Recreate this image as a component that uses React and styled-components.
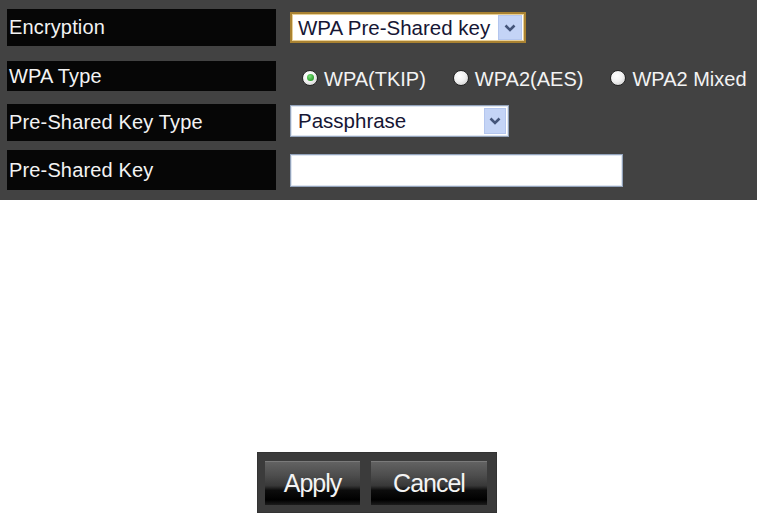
import React from "react";
import styled, { createGlobalStyle } from "styled-components";

const Global = createGlobalStyle`
  html, body { margin: 0; padding: 0; background: #ffffff; }
  body { font-family: "Liberation Sans", Arial, sans-serif; width: 757px; height: 513px; overflow: hidden; }
`;

const Page = styled.div`
  width: 757px;
  height: 513px;
  display: flex;
  flex-direction: column;
`;

const Panel = styled.div`
  background: #424242;
  height: 200px;
  box-sizing: border-box;
  padding: 9px 0 0 7px;
  display: flex;
  flex-direction: column;
`;

const Row = styled.div`
  display: flex;
  height: ${(p) => p.$h}px;
  margin-top: ${(p) => p.$mt || 0}px;
  gap: 14px;
`;

const Label = styled.div`
  width: 269px;
  flex: none;
  background: #060606;
  color: #f3f3f3;
  font-size: 20px;
  display: flex;
  align-items: center;
  padding-left: 2px;
  box-sizing: border-box;
  letter-spacing: 0.15px;
`;

const Cell = styled.div`
  display: flex;
  align-items: flex-start;
  padding-top: ${(p) => p.$pt || 0}px;
`;

const Select = styled.div`
  width: ${(p) => p.$w}px;
  height: ${(p) => p.$h}px;
  box-sizing: border-box;
  background: #ffffff;
  border: ${(p) => (p.$gold ? "2px solid #a98232" : "1px solid #93a3bb")};
  box-shadow: ${(p) =>
    p.$gold ? "inset 0 0 0 1px #e8cf95" : "inset 0 0 0 1px #dfe6f0"};
  display: flex;
  align-items: center;
  justify-content: space-between;
  padding: 0 2px 0 ${(p) => (p.$gold ? 6 : 7)}px;
  color: #161634;
  font-size: 20.5px;
`;

const Arrow = styled.div`
  width: ${(p) => p.$w}px;
  height: ${(p) => p.$h}px;
  background: #c4d4f6;
  border: 1px solid #b4c6ee;
  box-sizing: border-box;
  display: flex;
  align-items: center;
  justify-content: center;
`;

const TextInput = styled.div`
  width: 333px;
  height: 33px;
  box-sizing: border-box;
  background: #ffffff;
  border: 1px solid #93a3bb;
  box-shadow: inset 0 0 0 1px #dfe6f0;
`;

const RadioGroup = styled.div`
  display: flex;
  align-items: center;
  gap: 27px;
  margin-left: 12px;
`;

const RadioItem = styled.label`
  display: flex;
  align-items: center;
  gap: 6px;
  color: #f3f3f3;
  font-size: 20px;
`;

const RadioDot = styled.span`
  width: 16px;
  height: 16px;
  border-radius: 50%;
  box-sizing: border-box;
  border: 1px solid #262626;
  background: radial-gradient(circle at 40% 35%, #ffffff 0%, #f2f2f2 45%, #c4c4c4 100%);
  display: flex;
  align-items: center;
  justify-content: center;
  position: relative;
  top: -2px;
  &::after {
    content: "";
    display: ${(p) => (p.$on ? "block" : "none")};
    width: 7px;
    height: 7px;
    border-radius: 50%;
    background: radial-gradient(circle at 40% 35%, #7be07b 0%, #2f9e2f 70%, #1f7a1f 100%);
  }
`;

const Footer = styled.div`
  display: flex;
  margin-top: 252px;
  padding-left: 257px;
`;

const ButtonFrame = styled.div`
  display: flex;
  gap: 11px;
  padding: 9px 10px 8px 8px;
  background: #3b3b3b;
  box-shadow: inset 0 0 0 1px #333;
`;

const Button = styled.button`
  width: ${(p) => p.$w}px;
  height: 44px;
  border: none;
  border-top: 1px solid #7a7a7a;
  padding: 0;
  color: #f4f4f4;
  font-family: "Liberation Sans", Arial, sans-serif;
  font-size: 25px;
  letter-spacing: -1px;
  background: linear-gradient(
    #626262 0%,
    #4e4e4e 30%,
    #383838 55%,
    #0c0c0c 66%,
    #000000 88%,
    #1c1c1c 100%
  );
  display: flex;
  align-items: center;
  justify-content: center;
  cursor: pointer;
`;

const Chevron = () => (
  <svg width="12" height="8" viewBox="0 0 12 8">
    <path d="M1.5 1.5 L6 6 L10.5 1.5" fill="none" stroke="#44557a" strokeWidth="2.6" />
  </svg>
);

export default function App() {
  return (
    <Page>
      <Global />
      <Panel>
        <Row $h={37}>
          <Label>Encryption</Label>
          <Cell $pt={3}>
            <Select $gold $w={236} $h={31}>
              <span>WPA Pre-Shared key</span>
              <Arrow $w={24} $h={25}>
                <Chevron />
              </Arrow>
            </Select>
          </Cell>
        </Row>
        <Row $h={30} $mt={15}>
          <Label>WPA Type</Label>
          <Cell $pt={7}>
            <RadioGroup>
              <RadioItem>
                <RadioDot $on />
                WPA(TKIP)
              </RadioItem>
              <RadioItem>
                <RadioDot />
                WPA2(AES)
              </RadioItem>
              <RadioItem>
                <RadioDot />
                WPA2 Mixed
              </RadioItem>
            </RadioGroup>
          </Cell>
        </Row>
        <Row $h={37} $mt={13}>
          <Label>Pre-Shared Key Type</Label>
          <Cell $pt={1}>
            <Select $w={219} $h={32}>
              <span>Passphrase</span>
              <Arrow $w={22} $h={26}>
                <Chevron />
              </Arrow>
            </Select>
          </Cell>
        </Row>
        <Row $h={40} $mt={9}>
          <Label>Pre-Shared Key</Label>
          <Cell $pt={4}>
            <TextInput />
          </Cell>
        </Row>
      </Panel>
      <Footer>
        <ButtonFrame>
          <Button $w={95}>Apply</Button>
          <Button $w={116}>Cancel</Button>
        </ButtonFrame>
      </Footer>
    </Page>
  );
}
